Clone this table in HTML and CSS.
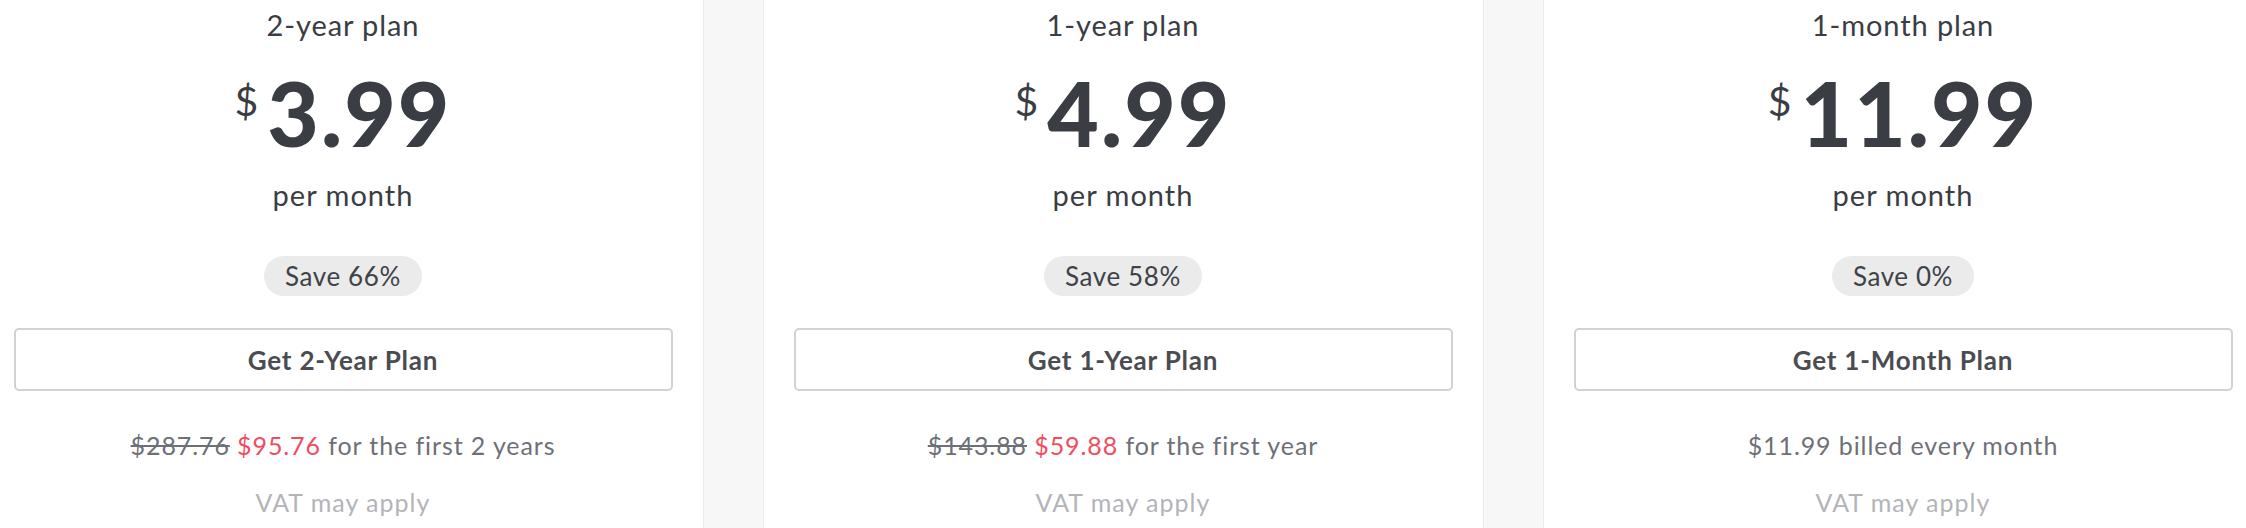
FILE: index.html
```html
<!DOCTYPE html>
<html lang="en">
<head>
<meta charset="utf-8">
<title>Plans</title>
<link rel="stylesheet" href="styles.css">
</head>
<body>
<div class="plans">
  <div class="card">
    <div class="title">2-year plan</div>
    <div class="price"><span class="cur">$</span><span class="amount">3.99</span></div>
    <div class="per">per month</div>
    <div class="pill-row"><span class="pill">Save 66%</span></div>
    <button class="btn">Get 2-Year Plan</button>
    <div class="billing"><s class="old">$287.76</s> <span class="new">$95.76</span> for the first 2 years</div>
    <div class="vat">VAT may apply</div>
  </div>
  <div class="card">
    <div class="title">1-year plan</div>
    <div class="price"><span class="cur">$</span><span class="amount">4.99</span></div>
    <div class="per">per month</div>
    <div class="pill-row"><span class="pill">Save 58%</span></div>
    <button class="btn">Get 1-Year Plan</button>
    <div class="billing"><s class="old">$143.88</s> <span class="new">$59.88</span> for the first year</div>
    <div class="vat">VAT may apply</div>
  </div>
  <div class="card">
    <div class="title">1-month plan</div>
    <div class="price"><span class="cur">$</span><span class="amount">11.99</span></div>
    <div class="per">per month</div>
    <div class="pill-row"><span class="pill">Save 0%</span></div>
    <button class="btn">Get 1-Month Plan</button>
    <div class="billing">$11.99 billed every month</div>
    <div class="vat">VAT may apply</div>
  </div>
</div>
</body>
</html>
```
FILE: styles.css
```css
html, body {
  margin: 0;
  padding: 0;
  height: 100%;
}
body {
  background: #f7f7f7;
  overflow: hidden;
  font-family: "Lato", "Open Sans", sans-serif;
  color: #3a3d43;
}
.plans {
  display: flex;
  justify-content: center;
  gap: 59px;
  height: 100%;
}
.card {
  flex: 0 0 721px;
  box-sizing: border-box;
  background: #ffffff;
  border-left: 1px solid #ebebeb;
  border-right: 1px solid #ebebeb;
  padding: 7px 30px 0;
  text-align: center;
  display: flex;
  flex-direction: column;
}
.title {
  font-size: 29px;
  line-height: 36px;
  letter-spacing: 0.9px;
}
.price {
  margin-top: 25px;
  display: flex;
  justify-content: center;
  align-items: flex-start;
  height: 90px;
}
.cur {
  font-size: 41px;
  line-height: 40px;
  margin-top: 13px;
  margin-right: 9px;
}
.amount {
  font-size: 89px;
  line-height: 90px;
  font-weight: 900;
  letter-spacing: 2px;
}
.per {
  margin-top: 19px;
  font-size: 29px;
  line-height: 36px;
  letter-spacing: 1px;
}
.pill-row {
  margin-top: 43px;
  display: flex;
  justify-content: center;
}
.pill {
  display: block;
  height: 40px;
  line-height: 40px;
  padding: 0 21px;
  border-radius: 20px;
  background: #ebebeb;
  font-size: 26px;
  letter-spacing: 0.6px;
  color: #3f4248;
}
.btn {
  margin-top: 32px;
  height: 63px;
  width: 100%;
  box-sizing: border-box;
  background: #ffffff;
  border: 2px solid #d2d2d2;
  border-radius: 5px;
  font-family: "Lato", "Open Sans", sans-serif;
  font-size: 26px;
  font-weight: 700;
  color: #4a4c52;
  letter-spacing: 0.8px;
  padding: 0;
}
.billing {
  margin-top: 38px;
  font-size: 25px;
  line-height: 32px;
  letter-spacing: 0.9px;
  color: #6e7077;
}
.old {
  color: #6e7077;
}
.new {
  color: #f24c60;
}
.vat {
  margin-top: 25px;
  font-size: 25px;
  line-height: 32px;
  letter-spacing: 1px;
  color: #b3b4b8;
}
```
